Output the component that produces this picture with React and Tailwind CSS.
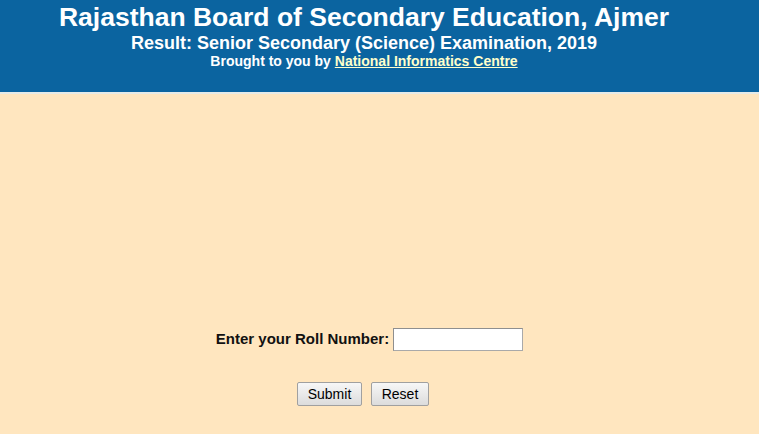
import React, { useState } from 'react';

export default function App() {
  const [roll, setRoll] = useState('');

  return (
    <div className="min-h-screen bg-[#ffe6bf]" style={{ fontFamily: '"Liberation Sans", Arial, sans-serif' }}>
      {/* Header */}
      <div className="bg-[#0b64a0] h-[94px] pr-[31px] text-center text-white border-b-2 border-[#e6ebe8]">
        <div className="pt-[1px] text-[26.5px] font-bold leading-[32px]">Rajasthan Board of Secondary Education, Ajmer</div>
        <div className="text-[18px] font-bold leading-[20px]">Result: Senior Secondary (Science) Examination, 2019</div>
        <div className="text-[14px] font-bold leading-[16px]">
          Brought to you by <a href="#" className="text-[#ffffcc] underline">National Informatics Centre</a>
        </div>
      </div>

      {/* Form */}
      <form className="pr-[31px] pt-[234px] text-center" onSubmit={e => e.preventDefault()}>
        <div className="flex items-center justify-center gap-[4px] pl-[11px]">
          <label className="text-[15px] font-bold text-[#111]">Enter your Roll Number:</label>
          <input
            type="text"
            value={roll}
            onChange={e => setRoll(e.target.value)}
            className="w-[130px] h-[23px] bg-white border border-[#a9a9a9] border-t-[#8f8f8f] border-l-[#8f8f8f] outline-none px-1 text-[13px]"
          />
        </div>
        <div className="flex justify-center gap-[9px] mt-[31px] pr-[2px]">
          <button type="submit" className="w-[65px] h-[24px] text-[14px] text-black bg-gradient-to-b from-[#f7f7f7] to-[#dcdcdc] border border-[#a0a0a0] rounded-[2px]">
            Submit
          </button>
          <button type="reset" onClick={() => setRoll('')} className="w-[58px] h-[24px] text-[14px] text-black bg-gradient-to-b from-[#f7f7f7] to-[#dcdcdc] border border-[#a0a0a0] rounded-[2px]">
            Reset
          </button>
        </div>
      </form>
    </div>
  );
}
